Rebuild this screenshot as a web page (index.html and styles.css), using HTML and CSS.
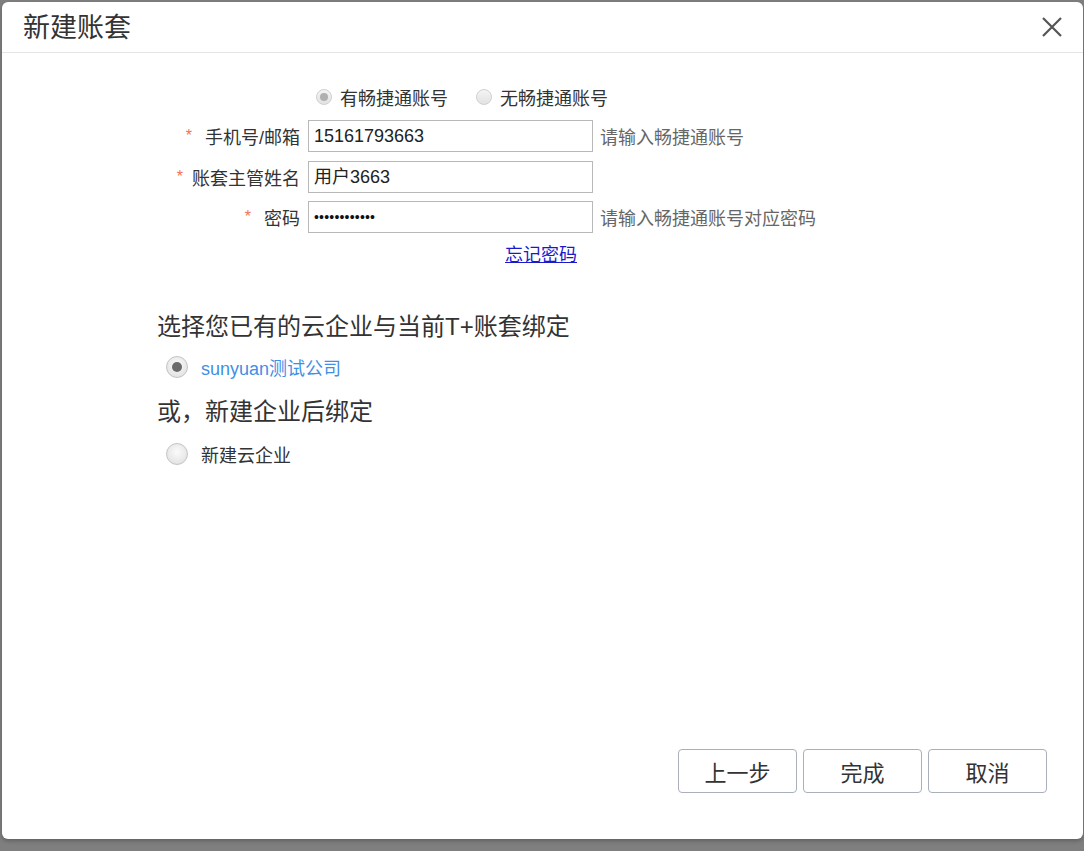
FILE: index.html
```html
<!DOCTYPE html>
<html lang="zh-CN">
<head>
<meta charset="utf-8">
<title>新建账套</title>
<link rel="stylesheet" href="styles.css">
</head>
<body>
<div class="backdrop">
  <div class="dialog">
    <div class="header">
      <div class="title">新建账套</div>
      <svg class="close" width="22" height="22" viewBox="0 0 22 22"><path d="M2 2 L20 20 M20 2 L2 20" stroke="#555" stroke-width="2.2" fill="none"/></svg>
    </div>
    <div class="body">
      <div class="account-type">
        <label class="opt"><span class="radio-sm checked"></span><span>有畅捷通账号</span></label>
        <label class="opt"><span class="radio-sm"></span><span>无畅捷通账号</span></label>
      </div>
      <div class="row">
        <div class="lbl"><span class="star">*</span>手机号/邮箱</div>
        <div class="input">15161793663</div>
        <div class="hint">请输入畅捷通账号</div>
      </div>
      <div class="row">
        <div class="lbl"><span class="star tight">*</span>账套主管姓名</div>
        <div class="input">用户3663</div>
      </div>
      <div class="row">
        <div class="lbl"><span class="star">*</span>密码</div>
        <div class="input pwd">••••••••••••</div>
        <div class="hint">请输入畅捷通账号对应密码</div>
      </div>
      <div class="link-row"><a class="forgot" href="#">忘记密码</a></div>

      <div class="section">
        <div class="sec-title">选择您已有的云企业与当前T+账套绑定</div>
        <label class="choice"><span class="radio-lg checked"></span><span class="company">sunyuan测试公司</span></label>
        <div class="sec-title second">或，新建企业后绑定</div>
        <label class="choice"><span class="radio-lg"></span><span>新建云企业</span></label>
      </div>
    </div>
    <div class="footer">
      <button class="btn">上一步</button>
      <button class="btn">完成</button>
      <button class="btn">取消</button>
    </div>
  </div>
</div>
</body>
</html>
```
FILE: styles.css
```css
html, body {
  margin: 0;
  padding: 0;
}
body {
  background: #7f7f7f;
  font-family: "Liberation Sans", "Noto Sans CJK SC", sans-serif;
  color: #333;
  width: 1084px;
  height: 851px;
  overflow: hidden;
}
.backdrop {
  padding: 2px 1px 0 2px;
}
.dialog {
  width: 1081px;
  height: 837px;
  background: #fff;
  border-radius: 6px;
  display: flex;
  flex-direction: column;
  box-shadow: 0 2px 4px rgba(0,0,0,0.25);
}
.header {
  border-bottom: 1px solid #e5e5e5;
  display: flex;
  align-items: center;
  justify-content: space-between;
  padding: 0 20px 3px 21px;
  box-sizing: border-box;
  height: 51px;
}
.title {
  font-size: 27px;
  color: #333;
}
.close {
  display: block;
  margin-top: 3px;
}
.body {
  padding-top: 32px;
}
.account-type {
  display: flex;
  align-items: center;
  padding-left: 314px;
  height: 24px;
  font-size: 18px;
  color: #333;
}
.opt {
  display: flex;
  align-items: center;
  margin-right: 28px;
}
.radio-sm {
  width: 16px;
  height: 16px;
  box-sizing: border-box;
  border-radius: 50%;
  border: 1px solid #d0d0d0;
  background: linear-gradient(#f4f4f4, #e2e2e2);
  margin-right: 8px;
  display: flex;
  align-items: center;
  justify-content: center;
}
.radio-sm.checked::after {
  content: "";
  width: 8px;
  height: 8px;
  border-radius: 50%;
  background: #b0b0b0;
}
.row {
  display: flex;
  align-items: center;
  margin-top: 8.5px;
  height: 32px;
}
.account-type + .row {
  margin-top: 11px;
}
.lbl {
  width: 150px;
  margin-left: 148px;
  text-align: right;
  font-size: 18px;
  color: #333;
  white-space: nowrap;
}
.star {
  color: #f07353;
  margin-right: 13px;
  font-size: 16px;
  position: relative;
  top: -3px;
}
.star.tight {
  margin-right: 9px;
}
.input {
  margin-left: 8px;
  width: 285px;
  height: 32px;
  box-sizing: border-box;
  border: 1px solid #b8b8b8;
  padding: 0 5px;
  font-size: 18px;
  line-height: 30px;
  color: #222;
}
.input.pwd {
  font-size: 14px;
  letter-spacing: 0.2px;
  color: #111;
}
.hint {
  margin-left: 7px;
  font-size: 18px;
  color: #666;
  white-space: nowrap;
}
.link-row {
  padding-left: 503px;
  margin-top: 10px;
  height: 24px;
  line-height: 24px;
}
.forgot {
  color: #1a1acc;
  font-size: 18px;
  text-decoration: underline;
}
.section {
  padding-left: 155px;
  margin-top: 44px;
}
.sec-title {
  font-size: 24px;
  line-height: 32px;
  color: #333;
}
.sec-title.second {
  margin-top: 15px;
}
.choice {
  display: flex;
  align-items: center;
  height: 28px;
  margin-top: 10px;
  padding-left: 9px;
  font-size: 18px;
  color: #333;
}
.sec-title.second + .choice {
  margin-top: 12px;
}
.company {
  color: #3f8fe6;
}
.radio-lg {
  width: 22px;
  height: 22px;
  box-sizing: border-box;
  border-radius: 50%;
  border: 1px solid #c4c4c4;
  background: radial-gradient(circle at 50% 40%, #fbfbfb, #dcdcdc);
  margin-right: 13px;
  display: flex;
  align-items: center;
  justify-content: center;
}
.radio-lg.checked::after {
  content: "";
  width: 10px;
  height: 10px;
  border-radius: 50%;
  background: #6a6a6a;
}
.footer {
  margin-top: auto;
  display: flex;
  justify-content: flex-end;
  gap: 6px;
  padding: 0 36px 46px 0;
}
.btn {
  width: 119px;
  height: 44px;
  background: #fff;
  border: 1px solid #a9afbb;
  border-radius: 4px;
  font-family: "Liberation Sans", "Noto Sans CJK SC", sans-serif;
  font-size: 22px;
  color: #333;
  padding: 0;
}
```
